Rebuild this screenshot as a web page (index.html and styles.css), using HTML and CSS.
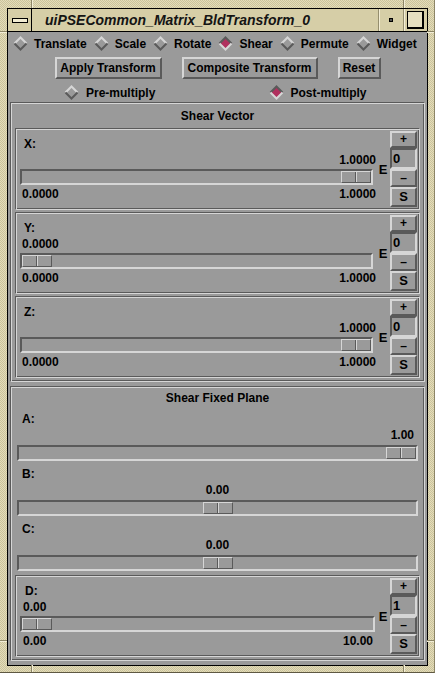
FILE: index.html
```html
<!DOCTYPE html>
<html>
<head>
<meta charset="utf-8">
<title>uiPSECommon_Matrix_BldTransform_0</title>
<link rel="stylesheet" href="styles.css">
</head>
<body>
<div class="window">
  <span class="notch nv n-t1"></span><span class="notch nv n-t2"></span>
  <span class="notch nv n-b1"></span><span class="notch nv n-b2"></span>
  <span class="notch nh n-l1"></span><span class="notch nh n-l2"></span>
  <span class="notch nh n-r1"></span><span class="notch nh n-r2"></span>
  <div class="inner">
    <div class="titlebar">
      <div class="tb-menu"><span class="menu-bar"></span></div>
      <div class="tb-title">uiPSECommon_Matrix_BldTransform_0</div>
      <div class="tb-min"><span class="min-dot"></span></div>
      <div class="tb-max"><span class="max-box"></span></div>
    </div>
    <div class="content">
      <div class="modes">
        <span class="opt"><svg class="dia" width="15" height="15" viewBox="0 0 15 15"><polygon points="7.5,1.5 13.5,7.5 7.5,13.5 1.5,7.5" class="d-fill"/><polyline points="1.5,7.5 7.5,1.5 13.5,7.5" class="d-hi"/><polyline points="1.5,7.5 7.5,13.5 13.5,7.5" class="d-lo"/></svg>Translate</span>
        <span class="opt"><svg class="dia" width="15" height="15" viewBox="0 0 15 15"><polygon points="7.5,1.5 13.5,7.5 7.5,13.5 1.5,7.5" class="d-fill"/><polyline points="1.5,7.5 7.5,1.5 13.5,7.5" class="d-hi"/><polyline points="1.5,7.5 7.5,13.5 13.5,7.5" class="d-lo"/></svg>Scale</span>
        <span class="opt"><svg class="dia" width="15" height="15" viewBox="0 0 15 15"><polygon points="7.5,1.5 13.5,7.5 7.5,13.5 1.5,7.5" class="d-fill"/><polyline points="1.5,7.5 7.5,1.5 13.5,7.5" class="d-hi"/><polyline points="1.5,7.5 7.5,13.5 13.5,7.5" class="d-lo"/></svg>Rotate</span>
        <span class="opt"><svg class="dia on" width="15" height="15" viewBox="0 0 15 15"><polygon points="7.5,1.5 13.5,7.5 7.5,13.5 1.5,7.5" class="d-fill"/><polyline points="1.5,7.5 7.5,1.5 13.5,7.5" class="d-hi"/><polyline points="1.5,7.5 7.5,13.5 13.5,7.5" class="d-lo"/></svg>Shear</span>
        <span class="opt"><svg class="dia" width="15" height="15" viewBox="0 0 15 15"><polygon points="7.5,1.5 13.5,7.5 7.5,13.5 1.5,7.5" class="d-fill"/><polyline points="1.5,7.5 7.5,1.5 13.5,7.5" class="d-hi"/><polyline points="1.5,7.5 7.5,13.5 13.5,7.5" class="d-lo"/></svg>Permute</span>
        <span class="opt"><svg class="dia" width="15" height="15" viewBox="0 0 15 15"><polygon points="7.5,1.5 13.5,7.5 7.5,13.5 1.5,7.5" class="d-fill"/><polyline points="1.5,7.5 7.5,1.5 13.5,7.5" class="d-hi"/><polyline points="1.5,7.5 7.5,13.5 13.5,7.5" class="d-lo"/></svg>Widget</span>
      </div>
      <div class="actions">
        <button class="btn b-apply">Apply Transform</button>
        <button class="btn b-comp">Composite Transform</button>
        <button class="btn b-reset">Reset</button>
      </div>
      <div class="order">
        <span class="opt o-pre"><svg class="dia" width="15" height="15" viewBox="0 0 15 15"><polygon points="7.5,1.5 13.5,7.5 7.5,13.5 1.5,7.5" class="d-fill"/><polyline points="1.5,7.5 7.5,1.5 13.5,7.5" class="d-hi"/><polyline points="1.5,7.5 7.5,13.5 13.5,7.5" class="d-lo"/></svg>Pre-multiply</span>
        <span class="opt o-post"><svg class="dia on" width="15" height="15" viewBox="0 0 15 15"><polygon points="7.5,1.5 13.5,7.5 7.5,13.5 1.5,7.5" class="d-fill"/><polyline points="1.5,7.5 7.5,1.5 13.5,7.5" class="d-hi"/><polyline points="1.5,7.5 7.5,13.5 13.5,7.5" class="d-lo"/></svg>Post-multiply</span>
      </div>

      <div class="frame vector">
        <div class="frame-title">Shear Vector</div>

        <div class="sub">
          <div class="sub-main">
            <div class="lbl">X:</div>
            <div class="val right">1.0000</div>
            <div class="trough end"><span class="thumb"></span></div>
            <div class="range"><span>0.0000</span><span>1.0000</span></div>
          </div>
          <div class="sub-e">E</div>
          <div class="sub-btns">
            <div class="sbtn b-plus">+</div>
            <div class="field">0</div>
            <div class="sbtn b-minus">–</div>
            <div class="sbtn b-s">S</div>
          </div>
        </div>

        <div class="sub">
          <div class="sub-main">
            <div class="lbl">Y:</div>
            <div class="val">0.0000</div>
            <div class="trough"><span class="thumb"></span></div>
            <div class="range"><span>0.0000</span><span>1.0000</span></div>
          </div>
          <div class="sub-e">E</div>
          <div class="sub-btns">
            <div class="sbtn b-plus">+</div>
            <div class="field">0</div>
            <div class="sbtn b-minus">–</div>
            <div class="sbtn b-s">S</div>
          </div>
        </div>

        <div class="sub">
          <div class="sub-main">
            <div class="lbl">Z:</div>
            <div class="val right">1.0000</div>
            <div class="trough end"><span class="thumb"></span></div>
            <div class="range"><span>0.0000</span><span>1.0000</span></div>
          </div>
          <div class="sub-e">E</div>
          <div class="sub-btns">
            <div class="sbtn b-plus">+</div>
            <div class="field">0</div>
            <div class="sbtn b-minus">–</div>
            <div class="sbtn b-s">S</div>
          </div>
        </div>
      </div>

      <div class="frame plane-frame">
        <div class="frame-title ft-plane">Shear Fixed Plane</div>

        <div class="plane first">
          <div class="lbl">A:</div>
          <div class="val right">1.00</div>
          <div class="trough end"><span class="thumb"></span></div>
        </div>
        <div class="plane">
          <div class="lbl">B:</div>
          <div class="val center">0.00</div>
          <div class="trough mid"><span class="thumb"></span></div>
        </div>
        <div class="plane last">
          <div class="lbl">C:</div>
          <div class="val center">0.00</div>
          <div class="trough mid"><span class="thumb"></span></div>
        </div>

        <div class="sub sub-d">
          <div class="sub-main">
            <div class="lbl">D:</div>
            <div class="val">0.00</div>
            <div class="trough"><span class="thumb"></span></div>
            <div class="range"><span>0.00</span><span>10.00</span></div>
          </div>
          <div class="sub-e">E</div>
          <div class="sub-btns">
            <div class="sbtn b-plus">+</div>
            <div class="field">1</div>
            <div class="sbtn b-minus">–</div>
            <div class="sbtn b-s">S</div>
          </div>
        </div>
      </div>
    </div>
  </div>
</div>
</body>
</html>
```
FILE: styles.css
```css
* { box-sizing: border-box; margin: 0; padding: 0; }
html, body { width: 435px; height: 673px; overflow: hidden; }
body {
  font-family: "Liberation Sans", Arial, sans-serif;
  font-size: 12px;
  font-weight: bold;
  color: #000;
  background: #d8d0a9;
}

/* ---------- window frame ---------- */
.window {
  position: relative;
  width: 435px;
  height: 673px;
  padding: 8px 6px 6px 7px;
  background: repeating-conic-gradient(#e3dcba 0 25%, #cbc39b 0 50%) 0 0 / 2px 2px;
  border-right: 1px solid #8c8566;
  border-bottom: 1px solid #5e5842;
}
.notch { position: absolute; background: #8c8566; }
.nv { width: 1px; height: 8px; box-shadow: 1px 0 #f3eed6; }
.nh { height: 1px; width: 7px; box-shadow: 0 1px #f3eed6; }
.n-t1 { left: 31px; top: 0; }
.n-t2 { left: 403px; top: 0; }
.n-b1 { left: 31px; bottom: 0; height: 7px; }
.n-b2 { left: 403px; bottom: 0; height: 7px; }
.n-l1 { left: 0; top: 31px; }
.n-l2 { left: 0; top: 640px; }
.n-r1 { right: 0; top: 31px; }
.n-r2 { right: 0; top: 640px; }

.inner {
  height: 100%;
  border: 1px solid #000;
  display: flex;
  flex-direction: column;
  background: #9a9a9a;
}

/* ---------- title bar ---------- */
.titlebar {
  flex: none;
  height: 23px;
  display: flex;
  background: #d6cea7;
  border-bottom: 1px solid #000;
}
.tb-menu {
  width: 24px;
  border-right: 1px solid #000;
  display: flex;
  align-items: center;
  justify-content: center;
}
.menu-bar {
  width: 16px;
  height: 5px;
  border: 1px solid #000;
  background: #f2ecd2;
}
.tb-title {
  flex: 1;
  padding-left: 13px;
  font-size: 14px;
  font-style: italic;
  font-weight: bold;
  line-height: 22px;
  color: #141414;
  white-space: nowrap;
  overflow: hidden;
}
.tb-min, .tb-max {
  display: flex;
  align-items: center;
  justify-content: center;
  border-left: 1px solid #958e6e;
  box-shadow: inset 1px 0 #f3eed6;
}
.tb-min { width: 25px; }
.tb-max { width: 24px; }
.min-dot {
  width: 4px;
  height: 4px;
  border: 1px solid #000;
  background: #555;
}
.max-box {
  width: 17px;
  height: 18px;
  border: 1px solid #000;
  border-right-width: 2px;
  border-bottom-width: 2px;
  background: #e6dfc0;
}

/* ---------- content ---------- */
.content {
  flex: 1;
  padding-top: 4px;
  display: flex;
  flex-direction: column;
}
.opt {
  display: flex;
  align-items: center;
  gap: 7px;
  height: 15px;
  white-space: nowrap;
}
.dia { flex: none; display: block; }
.d-fill { fill: #9a9a9a; }
.d-hi, .d-lo { fill: none; stroke-width: 2; }
.d-hi { stroke: #d6d6d6; }
.d-lo { stroke: #5a5a5a; }
.dia.on .d-fill { fill: #b0305e; }
.dia.on .d-hi { stroke: #5a5a5a; }
.dia.on .d-lo { stroke: #d6d6d6; }

.modes {
  display: flex;
  height: 15px;
  padding-left: 5px;
  gap: 7px;
}
.modes .opt { gap: 6px; }
.actions {
  display: flex;
  justify-content: center;
  gap: 20px;
  margin-top: 6px;
}
.btn {
  appearance: none;
  height: 22px;
  font: inherit;
  color: #000;
  background: #9a9a9a;
  border: 2px solid;
  border-color: #d6d6d6 #5a5a5a #5a5a5a #d6d6d6;
  text-align: center;
  padding: 0;
}
.b-apply { width: 107px; }
.b-comp { width: 136px; }
.b-reset { width: 43px; }

.order {
  display: grid;
  grid-template-columns: 1fr 1fr;
  margin-top: 6px;
  height: 15px;
}
.o-pre { padding-left: 56px; }
.o-post { padding-left: 51px; }

/* ---------- etched frames ---------- */
.frame {
  margin: 2px 2px 0 2px;
  border: 1px solid;
  border-color: #5a5a5a #d6d6d6 #d6d6d6 #5a5a5a;
  box-shadow: inset 1px 1px #d6d6d6, inset -1px -1px #5a5a5a;
  padding: 1px 4px 3px 4px;
}
.frame-title {
  height: 24px;
  line-height: 25px;
  text-align: center;
}
.plane-frame { margin-top: 4px; padding: 1px 1px 3px 1px; }
.ft-plane { height: 20px; line-height: 20px; }

.sub {
  display: flex;
  height: 82px;
  border: 1px solid;
  border-color: #5a5a5a #d6d6d6 #d6d6d6 #5a5a5a;
  box-shadow: inset 1px 1px #d6d6d6, inset -1px -1px #5a5a5a;
  padding: 2px;
}
.sub + .sub { margin-top: 2px; }
.sub-main {
  flex: 1;
  padding-top: 5px;
  min-width: 0;
}
.lbl { line-height: 16px; padding-left: 6px; }
.val { line-height: 16px; height: 16px; padding-left: 4px; }
.val.right { text-align: right; padding-right: 1px; }
.val.center { text-align: center; padding-left: 0; }
.range {
  display: flex;
  justify-content: space-between;
  line-height: 16px;
  margin-top: 1px;
  padding: 0 1px 0 4px;
}

.trough {
  height: 16px;
  display: flex;
  margin: 1px 4px 0 2px;
  border: 2px solid;
  border-color: #5a5a5a #d6d6d6 #d6d6d6 #5a5a5a;
}
.trough.end { justify-content: flex-end; }
.trough.mid { justify-content: center; }
.thumb {
  flex: none;
  width: 30px;
  height: 100%;
  border: 1px solid;
  border-color: #d6d6d6 #5a5a5a #5a5a5a #d6d6d6;
  background: linear-gradient(to right, transparent 13px, #5a5a5a 13px 14px, #d6d6d6 14px 15px, transparent 15px);
}

.sub-e {
  width: 13px;
  flex: none;
  padding-top: 31px;
  padding-right: 1px;
  line-height: 16px;
  text-align: center;
  font-size: 13px;
}
.sub-btns {
  width: 27px;
  flex: none;
  display: flex;
  flex-direction: column;
}
.sbtn {
  border: 2px solid;
  border-color: #d6d6d6 #5a5a5a #5a5a5a #d6d6d6;
  text-align: center;
}
.b-plus { height: 18px; line-height: 13px; }
.b-minus { height: 18px; line-height: 14px; }
.b-s { height: 20px; line-height: 16px; font-size: 13px; }
.field {
  height: 22px;
  border: 2px solid;
  border-color: #5a5a5a #d6d6d6 #d6d6d6 #5a5a5a;
  line-height: 17px;
  padding-left: 1px;
  font-size: 13px;
}

/* Shear Fixed Plane rows */
.plane { padding: 0 5px; }
.plane.first { padding-top: 4px; }
.plane .lbl { line-height: 15px; padding-left: 5px; }
.plane .val.right { padding-right: 4px; }
.plane .trough { margin: 2px 0 6px 0; }
.plane.last .trough { margin-bottom: 4px; }

.sub-d { margin: 0 3px; }
.sub-d .lbl { padding-left: 7px; }
.sub-d .val { padding-left: 5px; }
.sub-d .trough { margin-right: 2px; }
.sub-d .range { padding: 0 4px 0 5px; }
```
